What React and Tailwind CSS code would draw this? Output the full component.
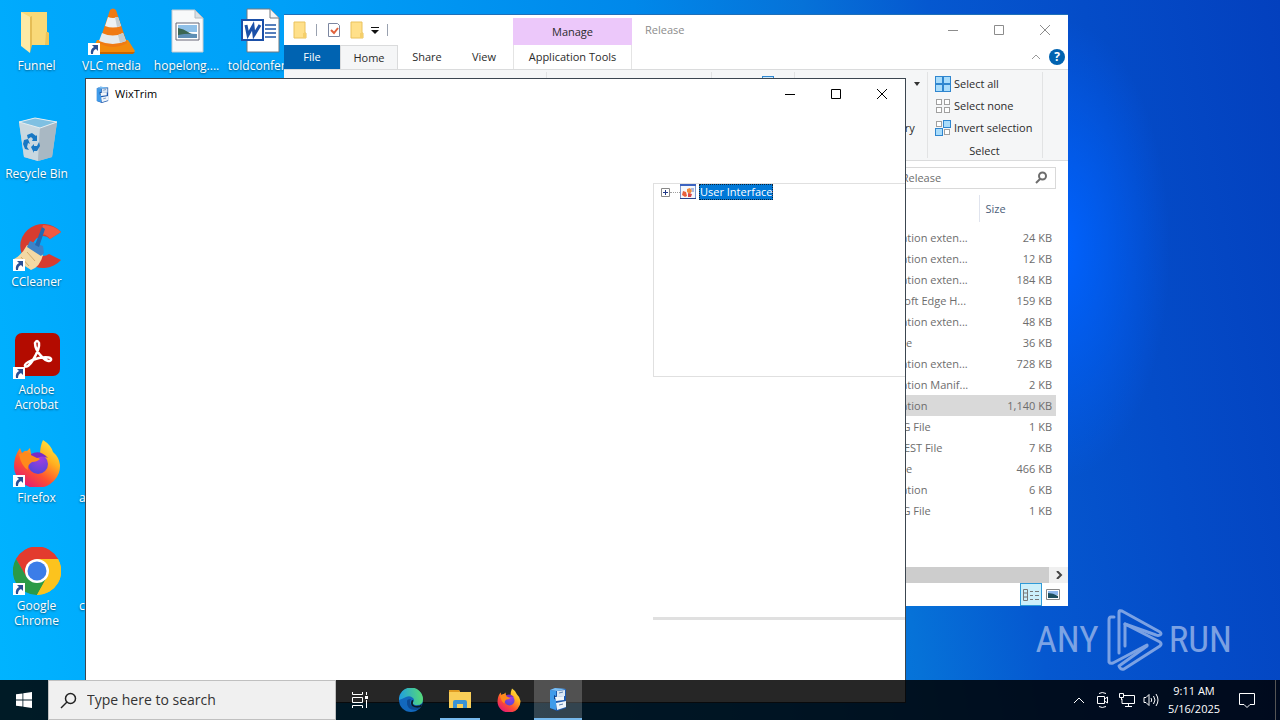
import React from 'react';

const FILES = [
  { type: 'Application exten...', size: '24 KB' },
  { type: 'Application exten...', size: '12 KB' },
  { type: 'Application exten...', size: '184 KB' },
  { type: 'Microsoft Edge H...', size: '159 KB' },
  { type: 'Application exten...', size: '48 KB' },
  { type: 'XML File', size: '36 KB' },
  { type: 'Application exten...', size: '728 KB' },
  { type: 'Application Manif...', size: '2 KB' },
  { type: 'Application', size: '1,140 KB', selected: true },
  { type: 'CONFIG File', size: '1 KB' },
  { type: 'MANIFEST File', size: '7 KB' },
  { type: 'XML File', size: '466 KB' },
  { type: 'Application', size: '6 KB' },
  { type: 'CONFIG File', size: '1 KB' },
];

/* ---------- desktop icons ---------- */

function FolderIcon() {
  return (
    <svg viewBox="0 0 48 48" className="w-12 h-12">
      <path d="M8 5h26v20l2 1v12H16z" fill="#f9d978" />
      <path d="M33 25h2l1 2v11h-4z" fill="#efc458" />
      <path d="M8 5l9 5v36l-9-7z" fill="#fdeaa6" />
      <path d="M17 10v36l2-8V9z" fill="#e5bd55" />
    </svg>
  );
}

function BinIcon() {
  return (
    <svg viewBox="0 0 48 48" className="w-12 h-12">
      <path d="M6 7l16-4 22 4-5 35-14 4-14-4z" fill="#b8c9d3" />
      <path d="M6 7l21 6-2 33-14-4z" fill="#c9d8e0" />
      <path d="M27 13l17-6-5 35-14 4z" fill="#a9b8c3" />
      <path d="M6 7l16-4 22 4-17 6z" fill="#7fc0e2" stroke="#e6eef2" strokeWidth="1" />
      <g fill="#1878c4">
        <path d="M14 20l5-2 4 3 1-1v6h-5l1-2-2-2-3 2z" />
        <path d="M11 25l4-1 2 5-2-1-1 4 2 3-4-1-2-5z" />
        <path d="M18 32l3-3v2h3l2-4 1 4-3 5h-3v2z" />
      </g>
    </svg>
  );
}

function VlcIcon() {
  return (
    <svg viewBox="0 0 48 48" className="w-12 h-12">
      <path d="M9 33h31l7 11-3 3H6l-2-3z" fill="#f28a0c" />
      <path d="M5 45h42l-2 2H6z" fill="#c96500" />
      <path d="M22 3q3-3 6 0l11 33q-14 8-28 0z" fill="#f07a12" />
      <path d="M20 10q5 2 10 0l3 9q-8 3-16 0z" fill="#eef1f2" />
      <path d="M14 26q11 5 21 0l3 8q-13 6-27 0z" fill="#e6eaec" />
      <path d="M30 10l3 9-4 1-2-10zM35 26l3 8-6 2-2-8z" fill="#c4ccd0" />
    </svg>
  );
}

function PictureFileIcon() {
  return (
    <svg viewBox="0 0 48 48" className="w-12 h-12">
      <path d="M9 3h23l8 8v34H9z" fill="#f8f9fa" stroke="#c8ccd0" />
      <path d="M32 3v8h8z" fill="#d9dfe4" stroke="#b5bcc2" />
      <path d="M13 16h23v17H13z" fill="#fff" stroke="#667" />
      <path d="M15 18h19v7H15z" fill="#8fc0e8" />
      <path d="M15 21q6 1 10 4t9 2v4H15z" fill="#3b6652" />
      <path d="M15 28q9-2 19-1v4H15z" fill="#5f8fb5" />
    </svg>
  );
}

function WordFileIcon() {
  return (
    <svg viewBox="0 0 48 48" className="w-12 h-12">
      <path d="M9 2h23l9 9v34H9z" fill="#fff" stroke="#707880" />
      <path d="M32 2v9h9" fill="#f1f3f5" stroke="#707880" />
      <path d="M27 18h11M27 22h11M27 26h11M27 30h11" stroke="#1f55a6" strokeWidth="1.500" />
      <path d="M4 13h21v20H4z" fill="#fff" stroke="#1b50a8" strokeWidth="2" />
      <path d="M8 18l2 10 5-9 1 9 6-10" fill="none" stroke="#1b50a8" strokeWidth="3" />
    </svg>
  );
}

function CCleanerIcon() {
  return (
    <svg viewBox="0 0 48 48" className="w-12 h-12">
      <path d="M48 37A23 22 0 1 1 48 9l-11 7a10 10 0 1 0-1 15z" fill="#d63c30" />
      <path d="M48 9l-11 7q-4-6-10-4l3-10q11 0 18 7z" fill="#ef5a42" />
      <path d="M14 22l16 10q-3 12-12 15L1 36q8-4 13-14z" fill="#f3d9a4" />
      <path d="M8 34l8 9M14 29l8 9" stroke="#d2ab6a" strokeWidth="1" />
      <path d="M17 18l13 5 1 7-3 3-14-9z" fill="#3d83c8" />
      <path d="M29 4l3 2-6 18-4-2z" fill="#2668b0" />
    </svg>
  );
}

function AcrobatIcon() {
  return (
    <svg viewBox="0 0 48 48" className="w-12 h-12">
      <rect x="2" y="2" width="45" height="43" rx="7" fill="#b30b00" />
      <path
        d="M22 12q2-4 4 0c1 5-3 12-6 17s-7 8-8 6 5-6 14-8 13 0 12 2-5 1-9-3-7-10-7-14z"
        fill="none"
        stroke="#fff"
        strokeWidth="2.500"
      />
    </svg>
  );
}

function FirefoxIcon({ className }) {
  return (
    <svg viewBox="0 0 48 48" className={className}>
      <defs>
        <linearGradient id="fxBody" x1="0.9" y1="0" x2="0.2" y2="1">
          <stop offset="0" stopColor="#fff04a" />
          <stop offset="0.35" stopColor="#ffb01f" />
          <stop offset="0.65" stopColor="#ff5130" />
          <stop offset="1" stopColor="#e0127e" />
        </linearGradient>
        <radialGradient id="fxGlobe" cx="0.6" cy="0.2" r="0.9">
          <stop offset="0" stopColor="#a43ce0" />
          <stop offset="1" stopColor="#4a48d8" />
        </radialGradient>
      </defs>
      <path
        d="M30 1q8 5 10 12 6 5 7 13a23 22 0 0 1-46 2Q1 17 7 9l2 5q3-3 5-2l3-3 1 6q5-1 9 1 0-9 3-15z"
        fill="url(#fxBody)"
      />
      <circle cx="25" cy="25" r="10" fill="url(#fxGlobe)" />
      <path d="M6 15q8-3 13 0l8 5q-3 3-8 3-5 3-4 8-7-4-9-16z" fill="#ff8a1c" />
      <path d="M18 15q9-5 17 4-6-3-11 0l-6-3z" fill="#7a2bc4" />
    </svg>
  );
}

function ChromeIcon() {
  return (
    <svg viewBox="0 0 48 48" className="w-12 h-12">
      <path d="M24 24L3 12a24 24 0 0 1 42 0z" fill="#e33b2e" />
      <path d="M24 24l21-12a24 24 0 0 1-21 36z" fill="#fcc31e" />
      <path d="M24 12h21a24 24 0 0 0-42 0l10 18z" fill="#e33b2e" />
      <path d="M13.500 30L3 12a24 24 0 0 0 21 36l10-18z" fill="#2a9a48" />
      <path d="M34 30L24 48a24 24 0 0 0 21-36H24z" fill="#fcc31e" />
      <circle cx="24" cy="24" r="12" fill="#fff" />
      <circle cx="24" cy="24" r="9.500" fill="#3b7de8" />
    </svg>
  );
}

function ShortcutArrow() {
  return (
    <svg viewBox="0 0 12 12" className="absolute left-0 bottom-0 w-3 h-3">
      <path d="M0 0h12v12H0z" fill="#fff" />
      <path d="M4 2h6v6L8 6Q5 7 5 11H3Q2 6 6 4z" fill="#2a4f94" />
    </svg>
  );
}

const ICONS = [
  { label: 'Funnel', icon: <FolderIcon /> },
  { label: 'Recycle Bin', icon: <BinIcon /> },
  { label: 'CCleaner', icon: <CCleanerIcon />, shortcut: true },
  { label: 'Adobe Acrobat', icon: <AcrobatIcon />, shortcut: true },
  { label: 'Firefox', icon: <FirefoxIcon className="w-12 h-12" />, shortcut: true },
  { label: 'Google Chrome', icon: <ChromeIcon />, shortcut: true },
  { label: 'VLC media', icon: <VlcIcon />, shortcut: true },
  null,
  null,
  null,
  { label: 'a', cut: true },
  { label: 'c', cut: true },
  { label: 'hopelong....', icon: <PictureFileIcon /> },
  null,
  null,
  null,
  null,
  null,
  { label: 'toldconfer...', icon: <WordFileIcon /> },
];

function DesktopIcon({ item }) {
  if (!item) return <div />;
  return (
    <button
      className={`flex flex-col pl-1 pr-1.5 pt-[7px] text-white text-xs leading-[15px] ${
        item.cut ? 'items-start' : 'items-center'
      }`}
    >
      <span className="relative w-12 h-12 shrink-0">
        {item.icon}
        {item.shortcut && <ShortcutArrow />}
      </span>
      <span className="mt-[3px] [text-shadow:0_1px_2px_#00000080]">{item.label}</span>
    </button>
  );
}

/* ---------- shared window parts ---------- */

function WindowButtons({ className }) {
  return (
    <div className={`flex ${className}`}>
      <button aria-label="Minimize" className="w-[46px] h-[30px] flex items-center justify-center">
        <svg viewBox="0 0 12 12" className="w-3 h-3" fill="none" stroke="currentColor">
          <path d="M1 6.500h10" />
        </svg>
      </button>
      <button aria-label="Maximize" className="w-[46px] h-[30px] flex items-center justify-center">
        <svg viewBox="0 0 12 12" className="w-3 h-3" fill="none" stroke="currentColor">
          <path d="M1.500 1.500h9v9h-9z" />
        </svg>
      </button>
      <button aria-label="Close" className="w-[46px] h-[30px] flex items-center justify-center">
        <svg viewBox="0 0 12 12" className="w-3 h-3" fill="none" stroke="currentColor">
          <path d="M1 1l10 10M11 1L1 11" />
        </svg>
      </button>
    </div>
  );
}

function CabinetIcon({ className }) {
  return (
    <svg viewBox="0 0 24 24" className={className}>
      <path d="M4 3l5-2 11 1v19l-9 3-7-3z" fill="#1c58ad" />
      <path d="M4 3l6 1v19l-6-2z" fill="#3f9bea" />
      <path d="M4 3l5-2 11 1-9 2z" fill="#7cc0f4" />
      <path d="M11 4l8-1v6l-8 1z" fill="#dce8f4" />
      <path d="M8 8l3 2v3l-3-1z" fill="#0d3f86" />
      <path d="M9 10l9-1v4l-8 1z" fill="#f2f6fa" />
      <path d="M10 16l10-2v6l-9 3z" fill="#eef4fa" />
      <path d="M13 6l4-1M13 18l4-1" stroke="#5b7fae" />
    </svg>
  );
}

/* ---------- explorer ---------- */

function SmallFolder() {
  return (
    <svg viewBox="0 0 16 18" className="w-4 h-[18px]">
      <path d="M2 1h11v11h1v5H2z" fill="#ffe08a" stroke="#eac25c" />
      <path d="M11 12h3v5h-3z" fill="#f5cf6a" />
    </svg>
  );
}

function SelectIcon({ fill, ghost }) {
  const cells = [
    [1, 1],
    [9, 1],
    [1, 9],
    [9, 9],
  ];
  return (
    <svg viewBox="0 0 17 17" className="w-[17px] h-[17px] shrink-0">
      {cells.map(([x, y], i) =>
        fill.includes(i) ? (
          <rect key={i} x={x - 0.5} y={y - 0.5} width="7" height="7" fill="#a9dcfb" stroke="#2f86cf" />
        ) : (
          <rect key={i} x={x + 0.5} y={y + 0.5} width="5" height="5" fill="#fff" stroke={ghost} />
        )
      )}
    </svg>
  );
}

function Explorer() {
  return (
    <section className="absolute left-[284px] top-3.5 w-[784px] h-[592px] flex flex-col bg-white border-t border-[#1f6fb8] text-[11px] leading-4 text-[#2b2b2b] overflow-hidden">
      <header className="flex h-[54px] shrink-0">
        <div className="w-[229px] flex flex-col">
          <div className="flex items-center h-[30px] pl-2 gap-2">
            <SmallFolder />
            <span className="w-px h-3 bg-gray-400" />
            <svg viewBox="0 0 14 16" className="ml-0.5 w-3.5 h-4">
              <path d="M1.500 1.500h9l2 2v11h-11z" fill="#fff" stroke="#7c86a0" />
              <path d="M4 8l3 3 4-5" fill="none" stroke="#e0603a" strokeWidth="2" />
            </svg>
            <span className="flex items-center gap-1.5">
              <SmallFolder />
              <svg viewBox="0 0 8 8" className="w-2 h-2">
                <path d="M0 1h8v1H0zM0 4h8L4 8z" fill="#111" />
              </svg>
            </span>
            <span className="w-px h-3 bg-gray-400" />
          </div>
          <nav className="flex h-6">
            <button className="w-14 bg-[#0063b1] text-white">File</button>
            <button className="w-[58px] bg-[#f5f6f7] border border-b-0 border-[#dadbdc]">Home</button>
            <button className="w-[58px]">Share</button>
            <button className="w-[56px]">View</button>
          </nav>
        </div>
        <div className="w-[119px] flex flex-col pt-[3px]">
          <div className="h-[27px] bg-[#ecc8fa] flex items-center justify-center">Manage</div>
          <button className="h-6 border-x border-[#e4e4e4] whitespace-nowrap">Application Tools</button>
        </div>
        <div className="flex-1 flex flex-col">
          <div className="flex justify-between pl-[13px] text-[#8c8c8c]">
            <span className="leading-[30px]">Release</span>
            <WindowButtons className="text-[#8c8c8c]" />
          </div>
          <div className="flex items-center justify-end gap-2 pr-[3px] h-6">
            <svg viewBox="0 0 10 6" className="w-2.5 h-1.5" fill="none" stroke="#999">
              <path d="M1 5l4-4 4 4" />
            </svg>
            <button className="w-4 h-4 rounded-full bg-[#0063b1] text-white font-bold text-xs leading-4">?</button>
          </div>
        </div>
      </header>

      <div className="flex h-[92px] shrink-0 bg-[#f5f6f7] border-y border-[#dadbdc] py-0.5">
        <div className="w-[263px] border-r border-[#e2e3e4]" />
        <div className="w-[165px] border-r border-[#e2e3e4]" />
        <div className="w-[83px] border-r border-[#e2e3e4] pl-[50px] pt-1">
          <span className="block w-3 h-3 border border-[#2f86cf] bg-[#cde9fb]" />
        </div>
        <div className="w-[133px] border-r border-[#e2e3e4] flex flex-col gap-1.5 pl-[83px] pt-1">
          <span className="flex items-center gap-2">
            Open
            <svg viewBox="0 0 6 4" className="w-1.5 h-1">
              <path d="M0 0h6L3 4z" fill="#333" />
            </svg>
          </span>
          <span>Edit</span>
          <span>History</span>
        </div>
        <div className="w-[115px] border-r border-[#e2e3e4] flex flex-col pl-[7px] pt-1 gap-1.5">
          <button className="flex items-center gap-0.5 h-4">
            <SelectIcon fill={[0, 1, 2, 3]} />
            Select all
          </button>
          <button className="flex items-center gap-0.5 h-4">
            <SelectIcon fill={[]} ghost="#a0a0a0" />
            Select none
          </button>
          <button className="flex items-center gap-0.5 h-4 whitespace-nowrap">
            <SelectIcon fill={[1, 2]} ghost="#a0a0a0" />
            Invert selection
          </button>
          <div className="text-center pr-2 pt-px">Select</div>
        </div>
      </div>

      <div className="flex justify-end pt-1.5 pr-3 shrink-0">
        <label className="flex items-center w-[203px] h-[22px] border border-[#d9d9d9] pl-2.5 pr-[7px]">
          <input
            aria-label="Search Release"
            placeholder="Search Release"
            className="flex-1 min-w-0 outline-none placeholder:text-[#6d6d6d]"
          />
          <svg viewBox="0 0 14 14" className="w-3.5 h-3.5" fill="none" stroke="#6d6d6d">
            <circle cx="8.500" cy="5" r="3.500" strokeWidth="2" />
            <path d="M6 8l-4 4" strokeWidth="2" />
          </svg>
        </label>
      </div>

      <table className="mt-1.5 ml-auto mr-3 w-[196px] table-fixed text-[#6d6d6d]">
        <thead>
          <tr className="h-[27px] text-left text-[#4c607a]">
            <th className="w-[119px] font-normal border-r border-[#e0e4ee]" />
            <th className="font-normal pl-1.5">Size</th>
          </tr>
          <tr className="h-[5px]" />
        </thead>
        <tbody>
          {FILES.map((file, i) => (
            <tr key={i} className={`h-[21px] ${file.selected ? 'bg-[#d9d9d9]' : ''}`}>
              <td className="pl-2.5 whitespace-nowrap">{file.type}</td>
              <td className="text-right pr-1">{file.size}</td>
            </tr>
          ))}
        </tbody>
      </table>

      <div className="mt-auto flex h-4 bg-[#f0f0f0] shrink-0">
        <div className="flex-1 bg-[#cdcdcd]" />
        <button aria-label="Scroll right" className="w-[19px] flex items-center justify-center">
          <svg viewBox="0 0 8 8" className="w-2 h-2" fill="none" stroke="#444" strokeWidth="2">
            <path d="M2 0l4 4-4 4" />
          </svg>
        </button>
      </div>
      <footer className="flex justify-end h-[23px] gap-1 pr-2 shrink-0">
        <button aria-label="Details" className="w-[22px] border border-[#2f9bd8] bg-[#cceffa] flex items-center justify-center">
          <svg viewBox="0 0 16 12" className="w-4 h-3" fill="none" stroke="#777">
            <path d="M.5.500h4v11h-4zM.5 4h4M.5 8h4M7 2.500h3M12 2.500h4M7 6.500h3M12 6.500h4M7 10.500h3M12 10.500h4" />
          </svg>
        </button>
        <button aria-label="Large icons" className="flex items-center">
          <svg viewBox="0 0 14 11" className="w-3.5 h-[11px]">
            <path d="M.5.500h13v10H.5z" fill="#fff" stroke="#888" />
            <path d="M2 2h10v4H2z" fill="#8fb8ec" />
            <path d="M2 4q5 0 10 3v2H2z" fill="#1f4f5e" />
          </svg>
        </button>
      </footer>
    </section>
  );
}

/* ---------- WixTrim ---------- */

function WixTrim() {
  return (
    <section className="absolute left-[85px] top-[78px] w-[821px] h-[625px] flex flex-col bg-white border border-[#3c4650] text-[11px] overflow-hidden">
      <header className="flex items-center justify-between h-[30px] shrink-0 pl-2 text-black">
        <span className="flex items-center gap-1">
          <CabinetIcon className="w-[17px] h-[17px]" />
          WixTrim
        </span>
        <WindowButtons className="text-black" />
      </header>
      <main className="pl-[567px] pt-[74px]">
        <div className="h-[194px] border border-r-0 border-[#e0e0e0]">
          <div className="flex items-center h-4 pl-[7px]">
            <button aria-label="Expand" className="w-[9px] h-[9px]">
              <svg viewBox="0 0 9 9" className="w-[9px] h-[9px]" fill="none">
                <path d="M.5.500h8v8h-8z" stroke="#888" />
                <path d="M2 4.500h5M4.500 2v5" stroke="#223a88" />
              </svg>
            </button>
            <span className="w-2.5 border-t border-dotted border-[#a0a0a0]" />
            <svg viewBox="0 0 16 16" className="w-4 h-4">
              <path d="M.5.500h15v14H.5z" fill="#f4f7fc" stroke="#7d97cc" />
              <path d="M0 0h16v2H0z" fill="#3a62c0" />
              <path d="M0 14h16v1H0z" fill="#27418c" />
              <path d="M11 5h3M12 7h2" stroke="#5f7cc0" />
              <path d="M7 5l3-1 2 3-2 3-3-2z" fill="#ef8a3c" />
              <path d="M3 7l3 1 1 4-2 1-3-2z" fill="#e8603c" />
              <path d="M8 9l4 1-1 3-3 0z" fill="#d8484c" />
            </svg>
            <span className="ml-[3px] h-4 leading-[14px] bg-[#0078d7] text-white border border-dotted border-[#123]">
              User Interface
            </span>
          </div>
        </div>
        <hr className="mt-60 border-0 h-[3px] bg-[#e0e0e0]" />
      </main>
    </section>
  );
}

/* ---------- watermark ---------- */

function Watermark() {
  return (
    <div className="absolute right-12 bottom-12 flex items-center gap-1.5 text-[#a3bdec] opacity-75 text-[37px] leading-[62px] font-['Liberation_Sans_Narrow','Roboto_Condensed','Roboto',sans-serif]">
      <span>ANY</span>
      <svg
        viewBox="0 0 58 64"
        className="w-[58px] h-16"
        fill="none"
        stroke="currentColor"
        strokeWidth="3"
        strokeLinejoin="round"
        strokeLinecap="round"
      >
        <path d="M9 9H6q-2 0-2 3v42q1 2 4 1l34-18" />
        <path d="M14 45V4q0-2 3-1l38 21q2 2 0 3t-4 0L20 16" />
        <path d="M20 16v22M20 16l35 18q2 2 0 4L19 61q-4 1-5-3l28-20" />
      </svg>
      <span>RUN</span>
    </div>
  );
}

/* ---------- taskbar ---------- */

function Taskbar() {
  return (
    <footer className="absolute inset-x-0 bottom-0 h-10 flex items-stretch bg-black/85 text-white">
      <button aria-label="Start" className="w-12 flex items-center justify-center">
        <svg viewBox="0 0 16 16" className="w-4 h-4" fill="#fff">
          <path d="M0 2.300l6.500-.9v6.200H0zM7.300 1.300L16 0v7.600H7.300zM0 8.400h6.500v6.200L0 13.700zM7.300 8.400H16V16l-8.700-1.200z" />
        </svg>
      </button>
      <label className="w-72 flex items-center gap-2.5 pl-[11px] bg-[#f0f0f0] border border-[#c0c0c0] text-[#2b2b2b]">
        <svg viewBox="0 0 17 17" className="w-[17px] h-[17px] shrink-0" fill="none" stroke="#222" strokeWidth="1.500">
          <circle cx="10.500" cy="6.500" r="5" />
          <path d="M7 10l-6 6" />
        </svg>
        <input
          aria-label="Type here to search"
          placeholder="Type here to search"
          className="flex-1 min-w-0 text-sm outline-none placeholder:text-[#333]"
        />
      </label>
      <button aria-label="Task View" className="w-12 mr-[3px] flex items-center justify-center">
        <svg viewBox="0 0 16 16" className="w-4 h-4" fill="none" stroke="#fff">
          <path d="M.5 0v2.500h10V0M.5 5.500h10v5H.5zM.5 16v-2.500h10V16M14.500 0v3M14.500 8v8" />
          <path d="M13 4h3v3h-3z" fill="#fff" stroke="none" />
        </svg>
      </button>
      <div className="flex gap-px">
        <button aria-label="Edge" className="w-12 flex items-center justify-center">
          <svg viewBox="0 0 24 24" className="w-6 h-6">
            <defs>
              <linearGradient id="edgeTop" x1="0" y1="0.4" x2="1" y2="0.3">
                <stop offset="0" stopColor="#1f9ee0" />
                <stop offset="1" stopColor="#58dc74" />
              </linearGradient>
            </defs>
            <circle cx="12" cy="12" r="12" fill="#1268bd" />
            <path d="M0 12a12 12 0 0 1 24-1q0 6-6 6-5 0-4-3 2-2 0-4-3-3-7-1T0 12z" fill="url(#edgeTop)" />
            <path d="M8 13q-1 9 9 9 3 0 5-3-7 2-10-2-2-3 0-6-4 0-4 2z" fill="#0c4a93" />
            <path d="M14 14q-1 3 3 4 4 0 6-2l-1 3q-5 2-9-1-2-3 0-6 2 0 1 2z" fill="#0b1a26" />
          </svg>
        </button>
        <button aria-label="File Explorer" className="w-12 flex flex-col items-center">
          <span className="flex-1 flex items-center">
            <svg viewBox="0 0 24 20" className="w-6 h-5">
              <path d="M1 1h10l1 2h11v16H1z" fill="#f9ce58" />
              <path d="M1 1h10l1 2H1z" fill="#e09c22" />
              <path d="M5 19v-6q0-2 2-2h10q2 0 2 2v6h-4v-4H9v4z" fill="#3b93d4" />
            </svg>
          </span>
          <span className="w-10 h-0.5 bg-[#76b9ed]" />
        </button>
        <button aria-label="Firefox" className="w-12 flex items-center justify-center">
          <FirefoxIcon className="w-6 h-6" />
        </button>
        <button aria-label="WixTrim" className="w-12 bg-white/20 flex flex-col items-center">
          <span className="flex-1 flex items-center">
            <CabinetIcon className="w-6 h-6" />
          </span>
          <span className="w-12 h-0.5 bg-[#76b9ed]" />
        </button>
      </div>

      <div className="ml-auto flex items-center">
        <button aria-label="Show hidden icons" className="w-6 flex justify-center">
          <svg viewBox="0 0 12 8" className="w-3 h-2" fill="none" stroke="#fff">
            <path d="M1 7l5-5 5 5" />
          </svg>
        </button>
        <button aria-label="Meet Now" className="w-6 flex justify-center">
          <svg viewBox="0 0 14 18" className="w-3.5 h-[18px]" fill="none" stroke="#fff">
            <path d="M1.500 5.500h7v7h-7zM8.500 8l3-2v6l-3-2M3 2.500q3-2 7 0M3 15.500q3 2 7 0" />
          </svg>
        </button>
        <button aria-label="Network" className="w-6 flex justify-center">
          <svg viewBox="0 0 16 14" className="w-4 h-3.5" fill="none" stroke="#fff">
            <path d="M5 2.500h10.500v8H3V6M.5.500h4v4h-4zM2.500 4v3M9.500 10.500v3M6 13.500h7" />
          </svg>
        </button>
        <button aria-label="Volume" className="w-6 flex justify-center">
          <svg viewBox="0 0 17 14" className="w-[17px] h-3.5" fill="none" stroke="#fff">
            <path d="M1 4.500h2l3-3v11l-3-3H1zM8 5q1.500 2 0 4M10.500 3q3 4 0 8M13 1q4 6 0 12" />
          </svg>
        </button>
        <div className="w-[62px] text-center text-[11px] leading-[18px]">
          <div>9:11 AM</div>
          <div>5/16/2025</div>
        </div>
        <button aria-label="Notifications" className="w-11 flex justify-center">
          <svg viewBox="0 0 16 16" className="w-4 h-4" fill="none" stroke="#fff">
            <path d="M.5 1.500h15v11H11l-3 3-3-3H.5z" />
          </svg>
        </button>
        <span className="w-px h-10 bg-[#555] ml-1.5 mr-1" />
      </div>
    </footer>
  );
}

export default function App() {
  return (
    <div className="relative h-screen overflow-hidden font-['Open_Sans','Noto_Sans',sans-serif] bg-[radial-gradient(ellipse_110px_230px_at_1060px_250px,#0062ff_0%,#0062ff00_100%),linear-gradient(80deg,#00b4ff_0%,#00a8fc_12%,#00a0f8_29%,#0088ea_54%,#0672d8_66%,#0558d0_75%,#044cc8_86%,#0340be_100%)]">
      <div className="grid grid-flow-col grid-rows-[repeat(6,108px)] auto-cols-[75px] w-max">
        {ICONS.map((item, i) => (
          <DesktopIcon key={i} item={item} />
        ))}
      </div>
      <Watermark />
      <Explorer />
      <WixTrim />
      <Taskbar />
    </div>
  );
}
